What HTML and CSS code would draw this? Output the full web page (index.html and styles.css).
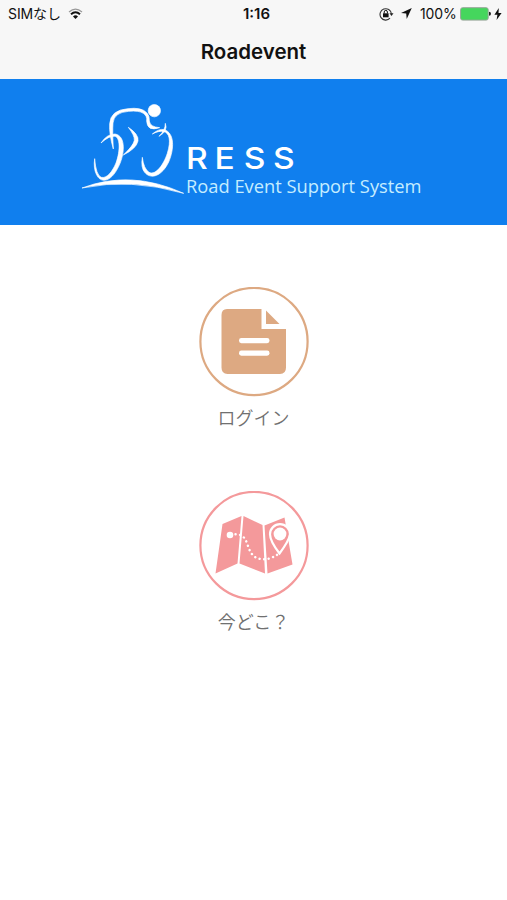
FILE: index.html
```html
<!DOCTYPE html>
<html lang="ja">
<head>
<meta charset="utf-8">
<title>Roadevent</title>
<link rel="stylesheet" href="styles.css">
</head>
<body>
<header class="top">
  <div class="status">
    <div class="side">
      <span class="carrier">SIMなし</span>
      <svg class="wifi" width="15" height="12" viewBox="0 0 15 12" fill="none" stroke="#111">
        <path d="M1 4Q7.5-1.8 14 4" stroke="#999" stroke-width="1.2"/>
        <path d="M3 6.3Q7.5 2 12 6.3" stroke-width="1.9"/>
        <path d="M5 8.4Q7.5 6.2 10 8.4L7.5 11Z" fill="#111" stroke="none"/>
      </svg>
    </div>
    <span class="time">1:16</span>
    <div class="side right">
      <svg class="lock" width="15" height="14" viewBox="0 0 15 14">
        <path d="M11 11.2A5.7 5.7 0 1 1 12.4 6.8" fill="none" stroke="#333" stroke-width="1.1"/>
        <path d="M10.5 6.2h4l-2 2.8Z" fill="#222"/>
        <rect x="4" y="6.3" width="5.6" height="4" fill="#111"/>
        <path d="M5.2 6.5V5a1.6 1.6 0 0 1 3.2 0v1.5" fill="none" stroke="#111"/>
      </svg>
      <svg class="arrow" width="11" height="11" viewBox="0 0 11 11"><path d="M10.8 0L0 5l5.200.6.5 5.300Z" fill="#111"/></svg>
      <span class="percent">100%</span>
      <svg class="battery" width="31" height="14" viewBox="0 0 31 14">
        <rect x=".6" y=".7" width="27.6" height="12.4" rx="2" fill="#45d65d" stroke="#96a698"/>
        <path d="M29 4.8q2 .2 2 2t-2 2Z" fill="#222"/>
      </svg>
      <svg class="bolt" width="8" height="12" viewBox="0 0 8 12"><path d="M4.8 0L.4 6.7h3L2.6 12l5-7H4.5Z" fill="#111"/></svg>
    </div>
  </div>
  <h1 class="title">Roadevent</h1>
</header>
<div class="banner">
  <svg class="logo" width="507" height="146" viewBox="0 79 507 146">
    <g class="rider" transform="translate(75 90) scale(.33333)">
      <circle cx="238" cy="62" r="18.500"/>
      <path d="M115 177Q102 132 104 102Q106 60 159 56Q199 51 215 68Q224 76 223 93Q225 111 254 113Q216 126 215 93Q217 78 205 70Q192 61 161 64Q117 67 114 99Q112 125 115 177Z"/>
      <path d="M78 159Q96 132 120 132C154 137 150 196 128 235C106 277 77 281 64 253Q55 234 59 206Q63 256 79 262C96 266 112 245 123 219C137 180 135 141 119 139Q104 136 78 159Z"/>
      <path d="M160 112Q192 133 189 153Q184 176 145 195Q176 166 178 151Q179 136 160 112Z"/>
      <path d="M232 132Q252 115 268 119C299 129 298 177 281 216C261 258 228 270 209 247Q197 233 202 202Q206 236 222 247C243 258 267 221 277 190C289 152 283 127 266 125Q253 121 232 132Z"/>
      <path d="M271 100Q280 123 252 139Q271 121 271 100Z"/>
      <path d="M21 294Q168 238 326 310Q167 264 21 294Z"/>
    </g>
    <text class="brand" transform="scale(1.12 1)" x="166 191.500 217.700 243.700" y="169">RESS</text>
    <text class="tagline" x="186" y="192.500" textLength="235.500" lengthAdjust="spacingAndGlyphs">Road Event Support System</text>
  </svg>
</div>
<main class="menu">
  <a class="item">
    <svg width="110" height="110" viewBox="0 0 110 110">
      <circle cx="55" cy="54.500" r="53.600" fill="none" stroke="#dda982" stroke-width="2.200"/>
      <path d="M28 22H62.500V42H87V80.500Q87 87 81 87H28.500Q22.500 87 22.500 80.500V28Q22.500 22 28 22Z" fill="#dda982"/>
      <path d="M67 23.500L80.500 37H67Z" fill="#dda982"/>
      <rect x="40" y="51" width="30.500" height="5.200" rx="2.400" fill="#fff"/>
      <rect x="40" y="63.500" width="30.500" height="5.200" rx="2.400" fill="#fff"/>
    </svg>
    <span class="label login">ログイン</span>
  </a>
  <a class="item">
    <svg width="110" height="110" viewBox="0 0 110 110">
      <circle cx="55" cy="54.500" r="53.600" fill="none" stroke="#f4999b" stroke-width="2.200"/>
      <path d="M23.500 33L42.500 25L38.500 72.500L16.500 82.500ZM44.500 25L63.500 34L66 82.500L40.500 72.500ZM65.500 34.500L85.500 26.500L93.500 73.500L68.500 82.500Z" fill="#f4999b"/>
      <circle cx="31" cy="44" r="3.300" fill="#fff"/>
      <path d="M36.500 43.300C51 43.300 46 59 56 66Q67 72 80 62.500" fill="none" stroke="#fff" stroke-width="2.400" stroke-linecap="round" stroke-dasharray=".1 4.500"/>
      <path d="M80.500 62.500Q71 50 71 43.200a10 10 0 0 1 20 0Q90 50 80.500 62.500Z" fill="#f4999b" stroke="#fff" stroke-width="2.200"/>
      <circle cx="81" cy="43" r="6.400" fill="#fff"/>
    </svg>
    <span class="label where">今どこ？</span>
  </a>
</main>
</body>
</html>
```

FILE: styles.css
```css
body {
  margin: 0;
  height: 900px;
  overflow: hidden;
  background: #fff;
  font-family: Inter, "Noto Sans CJK JP", sans-serif;
  color: #111;
}
.top {
  height: 79px;
  background: #f7f7f7;
}
.status {
  display: flex;
  align-items: center;
  height: 27px;
  padding: 0 5px 0 8px;
  font-size: 14px;
}
.side {
  display: flex;
  flex: 1;
  align-items: center;
}
.right { justify-content: flex-end; }
.carrier {
  width: 53px;
  white-space: nowrap;
  letter-spacing: -.1px;
  line-height: 27px;
}
.wifi { margin-left: 7px; }
.time {
  margin-left: 3px;
  font-size: 15px;
  font-weight: 600;
}
.arrow { margin: 0 8px 0 7px; }
.percent {
  width: 37px;
  white-space: nowrap;
  letter-spacing: -.1px;
}
.battery { margin: 0 3px; }
.title {
  margin: 0;
  line-height: 50px;
  text-align: center;
  font-size: 20.5px;
  font-weight: 600;
}
.banner {
  height: 146px;
  background: #107fee;
}
.logo { display: block; }
.rider {
  fill: #fff;
  stroke: #fff;
  stroke-width: 2px;
}
.brand {
  font: 500 30px Inter, sans-serif;
  fill: #fff;
}
.tagline {
  font: 18px "Open Sans", sans-serif;
  fill: #c5edff;
}
.menu {
  display: flex;
  flex-direction: column;
  align-items: center;
  gap: 64px;
  padding-top: 62px;
}
.item {
  display: flex;
  flex-direction: column;
  align-items: center;
  height: 140px;
}
.item svg { flex: none; }
.label {
  margin-top: 5px;
  line-height: 30px;
  font-family: "Noto Sans CJK JP", sans-serif;
  font-size: 18px;
  font-weight: 350;
  color: #707070;
}
```
